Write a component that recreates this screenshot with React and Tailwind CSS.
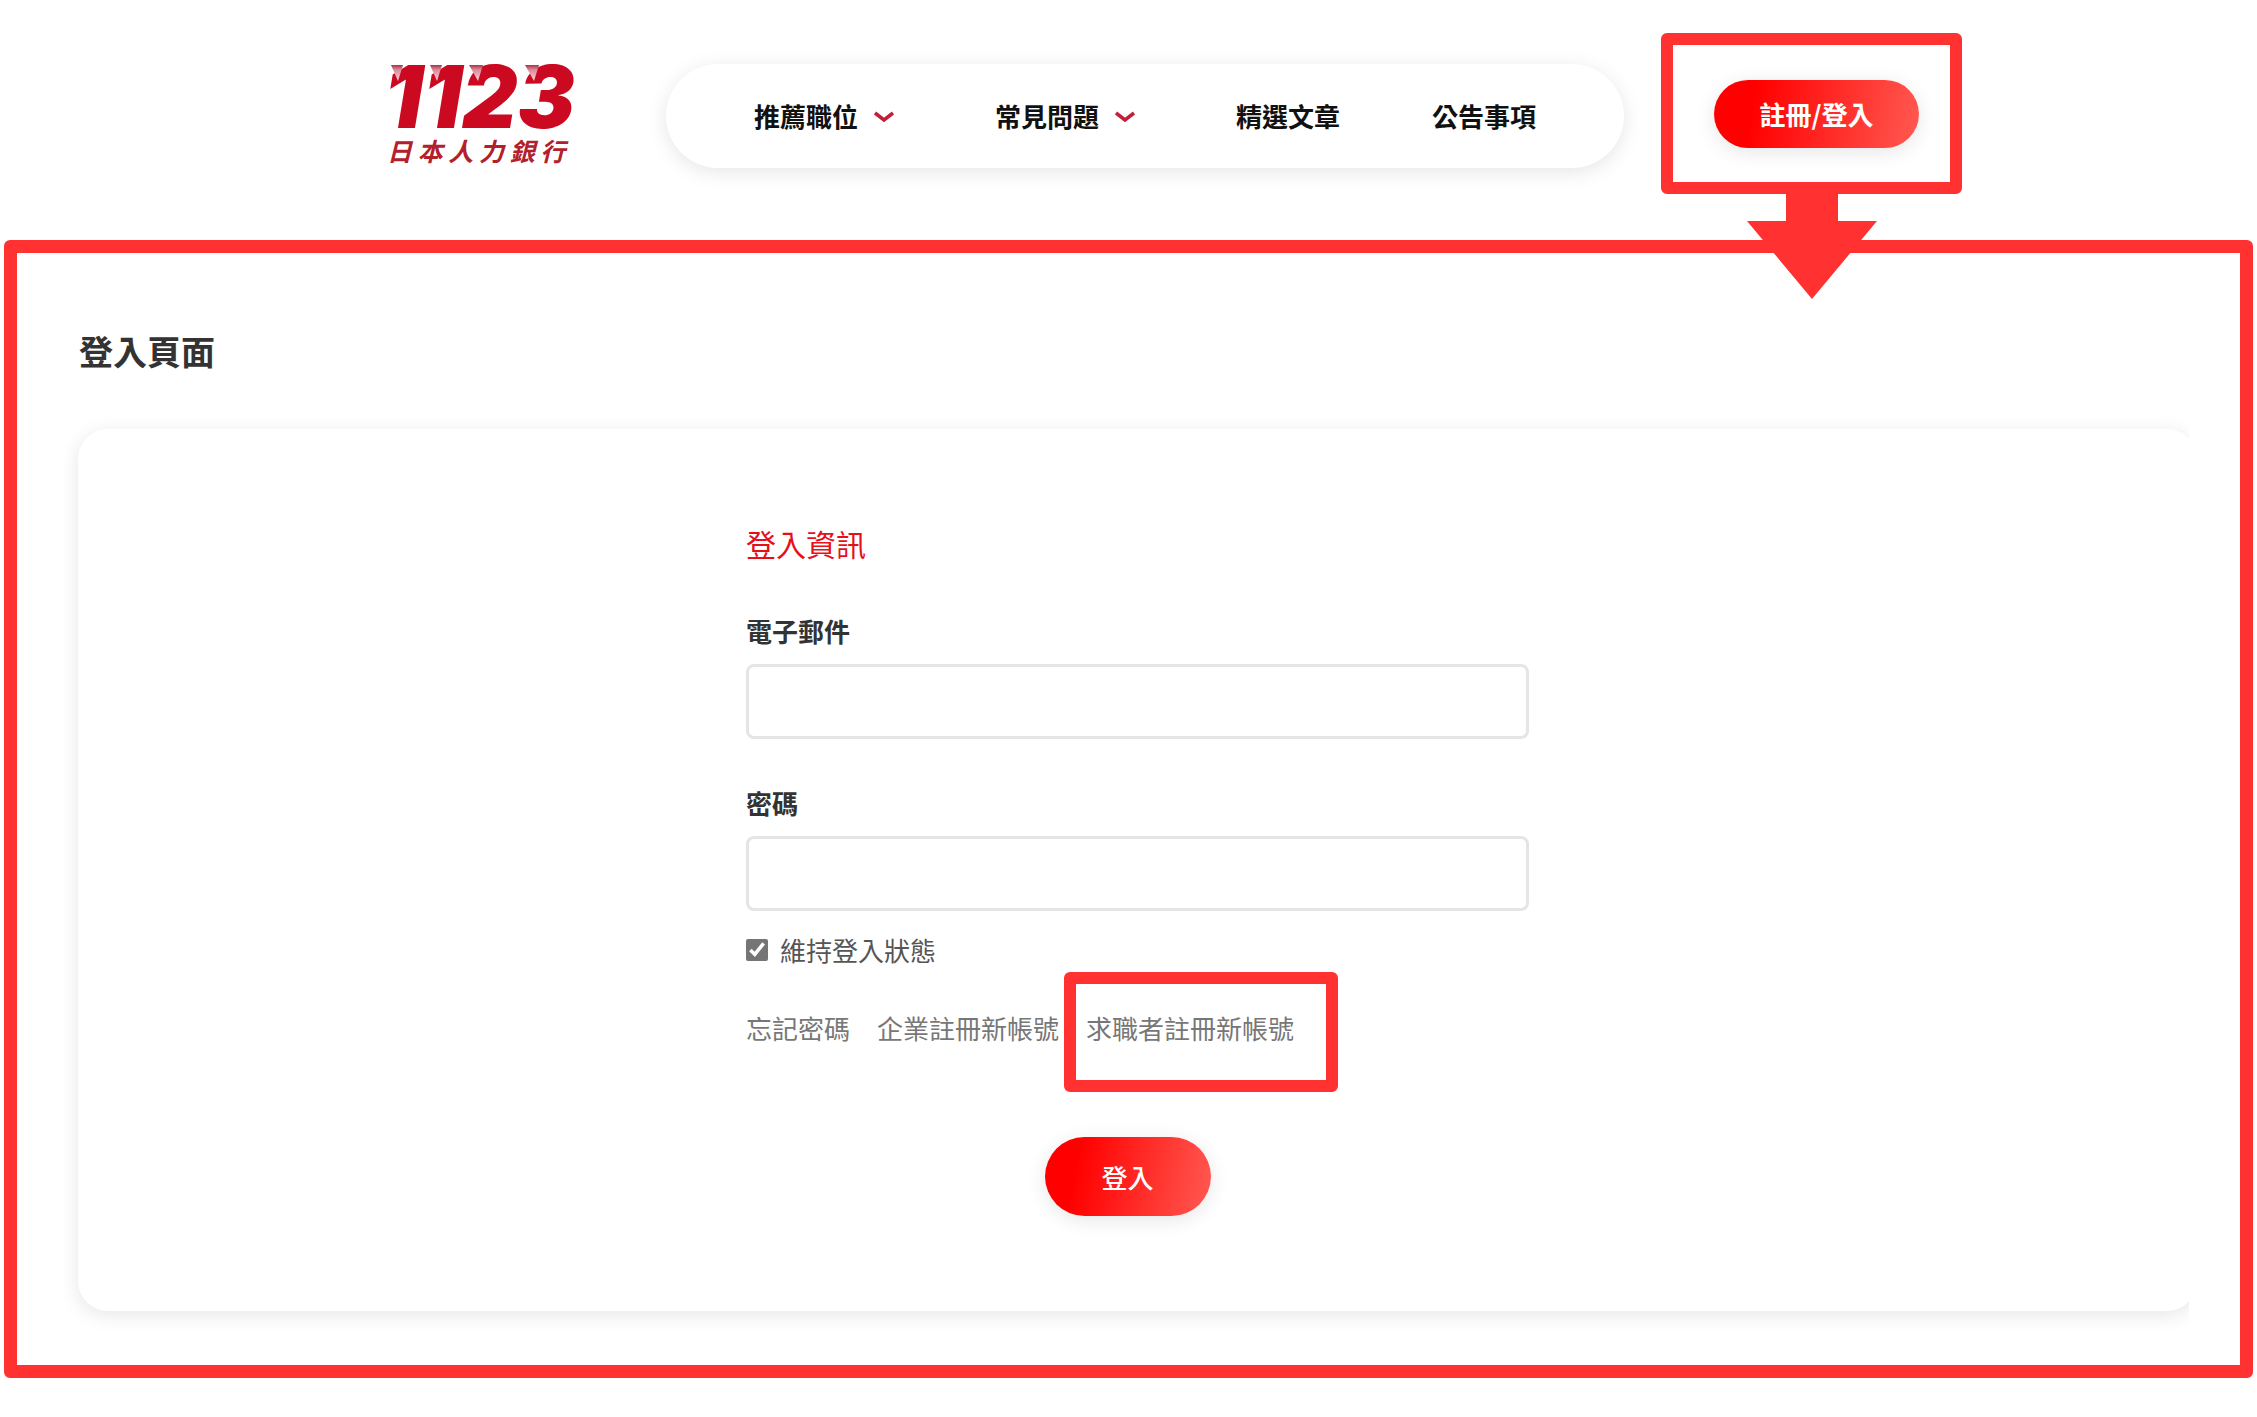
const NAV_ITEMS = [
  { label: "推薦職位", hasMenu: true },
  { label: "常見問題", hasMenu: true },
  { label: "精選文章", hasMenu: false },
  { label: "公告事項", hasMenu: false },
];

// folded ribbon corners on the logo digits
const FOLDS = [
  "4,3 16,3 11,19",
  "43,3 55,3 50,19",
  "82,3 96,3 91,19",
  "138,3 152,3 147,19",
];

function Logo() {
  return (
    <a href="#" className="block w-[188px] shrink-0">
      <svg viewBox="0 0 188 68" className="block h-[68px] w-full overflow-visible">
        <defs>
          <linearGradient id="fold" x1="0" y1="0" x2="0" y2="1">
            <stop offset="0" stopColor="#a8324a" />
            <stop offset="0.3" stopColor="#dd8a9a" />
            <stop offset="1" stopColor="#f9d5da" />
          </linearGradient>
        </defs>
        <text
          x="-3"
          y="66"
          fill="#cb0a22"
          className="font-['Inter',sans-serif] text-[86px] font-black italic"
        >
          1123
        </text>
        {FOLDS.map((points) => (
          <polygon key={points} points={points} fill="url(#fold)" />
        ))}
      </svg>
      <span className="mt-1 block text-[25px] leading-8 font-bold italic whitespace-nowrap text-[#b3202b]">
        日 本 人 力 銀 行
      </span>
    </a>
  );
}

function Chevron() {
  return (
    <svg viewBox="0 0 29 26" className="h-[26px] w-[29px]" fill="none">
      <path d="M1 10 L10 17 L19 10" stroke="#c41f38" strokeWidth="3.500" />
    </svg>
  );
}

function Navigation() {
  return (
    <nav className="mt-1 ml-[91px] flex h-[104px] shrink-0 items-center gap-[92px] rounded-full bg-white px-[88px] shadow-[0_4px_20px_rgba(0,0,0,0.1)]">
      {NAV_ITEMS.map((item) => (
        <a
          key={item.label}
          href="#"
          className="flex items-center gap-4 text-[26px] leading-9 font-bold text-[#111]"
        >
          {item.label}
          {item.hasMenu && <Chevron />}
        </a>
      ))}
    </nav>
  );
}

function Header() {
  return (
    <header className="flex items-center justify-center pt-[33px] pb-[46px] pl-23">
      <Logo />
      <Navigation />
      <div className="relative ml-[37px] shrink-0 rounded-md border-12 border-[#ff3131] pt-[35px] pr-[31px] pb-[34px] pl-[41px]">
        <button
          type="button"
          className="block h-[68px] w-[205px] rounded-full bg-[linear-gradient(100deg,#ff0000_20%,#ff5a52)] text-[26px] leading-9 font-bold text-white shadow-[0_4px_20px_rgba(0,0,0,0.1)]"
        >
          註冊/登入
        </button>
        <svg
          viewBox="0 0 130 106"
          className="absolute top-full left-1/2 z-10 mt-[11px] h-[106px] w-[130px] -translate-x-1/2"
        >
          <path d="M39 0 H91 V28 H130 L65 106 L0 28 H39 Z" fill="#ff3131" />
        </svg>
      </div>
    </header>
  );
}

function Field({ id, label, type }) {
  return (
    <div>
      <label htmlFor={id} className="block text-[26px] leading-9 font-bold text-[#333]">
        {label}
      </label>
      <input
        id={id}
        type={type}
        className="mt-[15px] block h-[75px] w-full rounded-lg border-3 border-[#e5e5e5] bg-white px-6 text-[26px]"
      />
    </div>
  );
}

function LoginForm() {
  return (
    <form className="mx-auto w-full max-w-[783px]" onSubmit={(e) => e.preventDefault()}>
      <h2 className="text-[30px] leading-10 text-[#e60f1a]">登入資訊</h2>
      <div className="mt-[50px] flex flex-col gap-[46px]">
        <Field id="email" label="電子郵件" type="email" />
        <Field id="password" label="密碼" type="password" />
      </div>
      <div className="mt-[21px] flex items-center gap-3">
        <input id="remember" type="checkbox" defaultChecked className="size-[22px] accent-[#757575]" />
        <label htmlFor="remember" className="text-[26px] leading-9 text-[#555]">
          維持登入狀態
        </label>
      </div>
      <div className="mt-[42px] flex gap-[27px] text-[26px] leading-9 text-[#777]">
        <a href="#">忘記密碼</a>
        <a href="#">企業註冊新帳號</a>
        <a href="#" className="relative">
          求職者註冊新帳號
          <span className="pointer-events-none absolute -top-[38px] -right-11 -bottom-[46px] -left-[22px] rounded-md border-12 border-[#ff3131]" />
        </a>
      </div>
      <div className="mt-[91px] flex justify-center pr-5">
        <button
          type="submit"
          className="h-[79px] w-[166px] rounded-full bg-[linear-gradient(100deg,#ff0000_20%,#ff5a52)] text-[26px] leading-9 font-medium text-white shadow-[0_4px_20px_rgba(0,0,0,0.1)]"
        >
          登入
        </button>
      </div>
    </form>
  );
}

export default function App() {
  return (
    <div className="bg-white pb-[38px] font-['Noto_Sans_CJK_TC',sans-serif]">
      <Header />
      <main className="mx-1 rounded-md border-13 border-[#ff3131] pt-[74px] pb-[34px]">
        <h1 className="pl-[62px] text-[34px] leading-[48px] font-bold text-[#333]">登入頁面</h1>
        <div className="mt-[38px] mr-[51px] ml-[46px] overflow-hidden pt-4 pb-5 pl-[15px]">
          <section className="-mr-2 rounded-[30px] bg-white pt-[94px] pb-[95px] shadow-[0_4px_20px_rgba(0,0,0,0.1)]">
            <LoginForm />
          </section>
        </div>
      </main>
    </div>
  );
}
